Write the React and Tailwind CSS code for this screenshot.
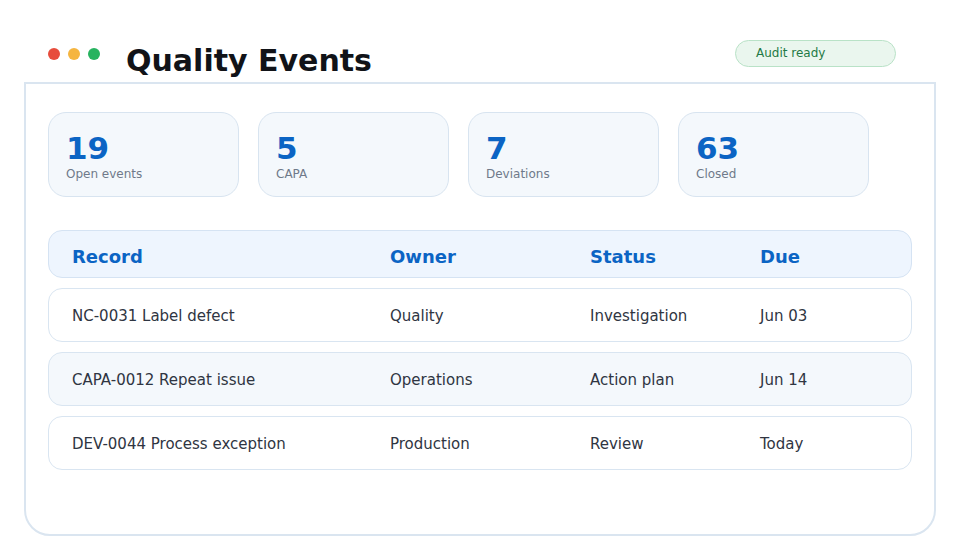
import React from 'react'

const STATS = [
  { value: '19', label: 'Open events' },
  { value: '5', label: 'CAPA' },
  { value: '7', label: 'Deviations' },
  { value: '63', label: 'Closed' },
]

const ROWS = [
  { record: 'NC-0031 Label defect', owner: 'Quality', status: 'Investigation', due: 'Jun 03' },
  { record: 'CAPA-0012 Repeat issue', owner: 'Operations', status: 'Action plan', due: 'Jun 14' },
  { record: 'DEV-0044 Process exception', owner: 'Production', status: 'Review', due: 'Today' },
]

export default function App() {
  return (
    <div className="w-[960px] h-[560px] bg-white pl-6 pr-[24px] pt-10 font-['DejaVu_Sans',sans-serif]">
      {/* Header */}
      <div className="flex items-center justify-between pl-6 pr-10 h-[27px]">
        <div className="flex items-center">
          <div className="flex items-center gap-2">
            <span className="w-3 h-3 rounded-full bg-[#e74c3c]" />
            <span className="w-3 h-3 rounded-full bg-[#f5b540]" />
            <span className="w-3 h-3 rounded-full bg-[#27b35f]" />
          </div>
          <h1 className="ml-[26px] mt-[14px] text-[30px] leading-none font-bold text-[#111318]">Quality Events</h1>
        </div>
        <span className="w-[161px] h-[27px] rounded-full border border-[#b9e2c7] bg-[#eaf6ee] pl-5 pb-px flex items-center text-[12px] text-[#1f7a45]">
          Audit ready
        </span>
      </div>

      {/* Panel */}
      <div className="mt-[15px] h-[454px] border-2 border-[#dae5f0] rounded-b-[26px] px-[22px] pt-[28px]">
        <div className="flex gap-[19px]">
          {STATS.map((s) => (
            <div key={s.label} className="w-[191px] h-[85px] rounded-[18px] border border-[#d8e4f0] bg-[#f4f8fc] pl-[17px] pt-[20px]">
              <div className="text-[31px] leading-[31px] font-bold text-[#0b64c4]">{s.value}</div>
              <div className="mt-[3px] text-[12px] leading-[14px] text-[#6f7a8a]">{s.label}</div>
            </div>
          ))}
        </div>

        <div className="mt-[33px] flex flex-col gap-[10px]">
          <div className="h-[48px] rounded-[14px] border border-[#d5e3f3] bg-[#eef5fe] pl-[23px] pt-[4px] flex items-center text-[18px] font-bold text-[#0b64c4]">
            <span className="w-[318px]">Record</span>
            <span className="w-[200px]">Owner</span>
            <span className="w-[170px]">Status</span>
            <span>Due</span>
          </div>
          {ROWS.map((r, i) => (
            <div
              key={r.record}
              className={`h-[54px] rounded-[14px] border border-[#d9e5f1] pl-[23px] pt-[2px] flex items-center text-[15px] text-[#2f3542] ${
                i === 1 ? 'bg-[#f4f8fc]' : 'bg-white'
              }`}
            >
              <span className="w-[318px]">{r.record}</span>
              <span className="w-[200px]">{r.owner}</span>
              <span className="w-[170px]">{r.status}</span>
              <span>{r.due}</span>
            </div>
          ))}
        </div>
      </div>
    </div>
  )
}
